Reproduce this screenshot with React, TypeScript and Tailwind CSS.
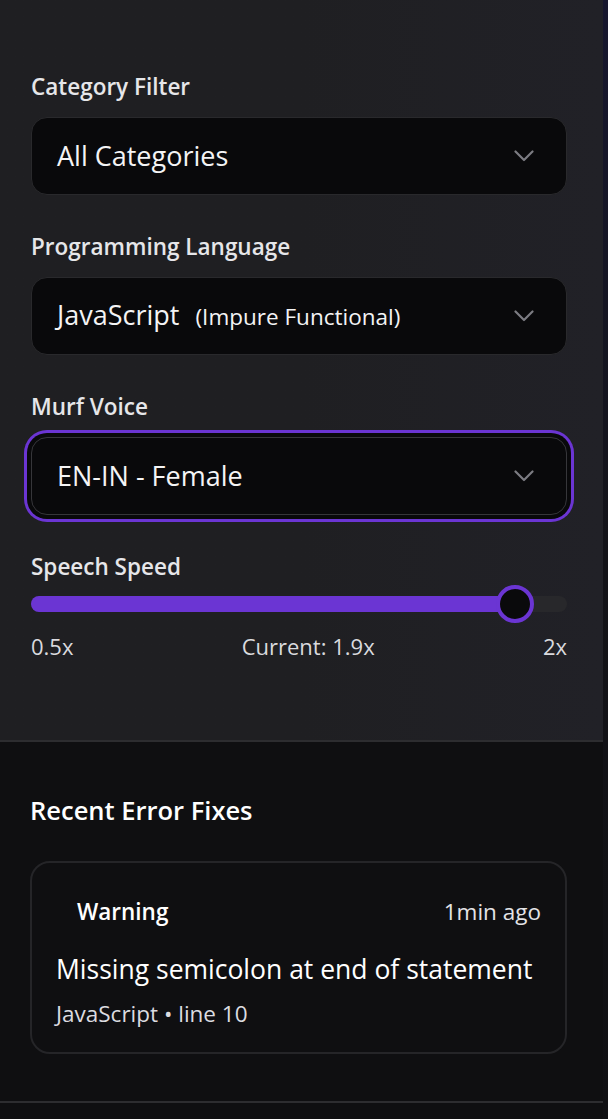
import { useState } from "react";

const FIELDS = [
  { label: "Category Filter", value: "All Categories", note: "" },
  { label: "Programming Language", value: "JavaScript", note: "(Impure Functional)" },
  { label: "Murf Voice", value: "EN-IN - Female", note: "", focused: true },
];

function Chevron() {
  return (
    <svg width="20" height="12" viewBox="0 0 20 12" fill="none" className="shrink-0">
      <polyline
        points="1.5,1.5 10,10 18.5,1.5"
        stroke="#7c7c82"
        strokeWidth="2.2"
        strokeLinecap="round"
        strokeLinejoin="round"
      />
    </svg>
  );
}

function SelectBox({ value, note, focused }: { value: string; note: string; focused?: boolean }) {
  return (
    <button
      type="button"
      className={
        "flex h-[78px] w-full items-center justify-between rounded-2xl border bg-[#09090b] pl-[25px] pr-[32px] text-left " +
        (focused
          ? "border-[#36363a] ring-[3px] ring-[#6b35d3] ring-offset-[4px] ring-offset-[#09090b]"
          : "border-[#29292c]")
      }
    >
      <span className="flex items-baseline text-[27px] leading-8 text-[#f4f4f5]">
        {value}
        {note && <span className="ml-[16px] text-[22.5px] text-[#f4f4f5]">{note}</span>}
      </span>
      <Chevron />
    </button>
  );
}

function SpeedSlider() {
  const [speed] = useState(1.9);
  const min = 0.5;
  const max = 2;
  const pct = (speed - min) / (max - min);

  return (
    <div>
      <div className="relative mt-1 h-[38px]">
        <div className="absolute left-0 right-0 top-[11px] h-4 rounded-full bg-[#28282b]" />
        <div
          className="absolute left-0 top-[11px] h-4 rounded-full bg-[#6b35d3]"
          style={{ width: `calc(19px + ${pct} * (100% - 38px))` }}
        />
        <div
          className="absolute top-0 h-[38px] w-[38px] rounded-full border-4 border-[#6b35d3] bg-[#0a0a0c]"
          style={{ left: `calc(${pct} * (100% - 38px))` }}
        />
      </div>
      <div className="mt-[9px] flex items-center justify-between text-[22px] leading-7 text-[#dadade]">
        <span>0.5x</span>
        <span>Current: {speed}x</span>
        <span>2x</span>
      </div>
    </div>
  );
}

export default function App() {
  return (
    <div className="flex min-h-screen bg-gradient-to-b from-[#17172e] via-[#131318] to-[#101013] font-['Segoe_UI','Open_Sans',sans-serif]">
      <aside className="flex w-[603px] shrink-0 flex-col">
        <section className="border-b-2 border-[#2d2d30] bg-gradient-to-r from-[#1f1f22] via-[#1f1f22] to-[#212127] pb-[80px] pl-[31px] pr-[36px] pt-[73px]">
          <div className="flex flex-col gap-[38px]">
            {FIELDS.map((f) => (
              <div key={f.label}>
                <label className="mb-4 block text-[22.5px] font-semibold leading-7 text-[#e6e6e9]">
                  {f.label}
                </label>
                <SelectBox value={f.value} note={f.note} focused={f.focused} />
              </div>
            ))}
            <div>
              <label className="block text-[22.5px] font-semibold leading-7 text-[#e6e6e9]">
                Speech Speed
              </label>
              <SpeedSlider />
            </div>
          </div>
        </section>

        <section className="flex-1 bg-[#0f0f11] pl-[30px] pr-[36px] pt-[52px]">
          <h2 className="mb-[35px] text-[25.5px] font-semibold leading-8 text-white">
            Recent Error Fixes
          </h2>
          <div className="rounded-[20px] border-2 border-[#252528] px-[24px] pb-[24px] pt-[35px]">
            <div className="flex items-center justify-between">
              <span className="pl-[21px] text-[22.5px] font-semibold leading-7 text-white">Warning</span>
              <span className="text-[22.5px] leading-7 text-[#e4e4e7]">1min ago</span>
            </div>
            <p className="mt-[27px] text-[26.5px] leading-8 text-white">
              Missing semicolon at end of statement
            </p>
            <p className="mt-[15px] text-[22.5px] leading-7 text-[#dcdce0]">JavaScript • line 10</p>
          </div>
          <div className="-ml-[30px] -mr-[36px] mt-[47px] border-b-2 border-[#2d2d30]" />
        </section>
      </aside>
      <div className="flex-1" />
    </div>
  );
}
